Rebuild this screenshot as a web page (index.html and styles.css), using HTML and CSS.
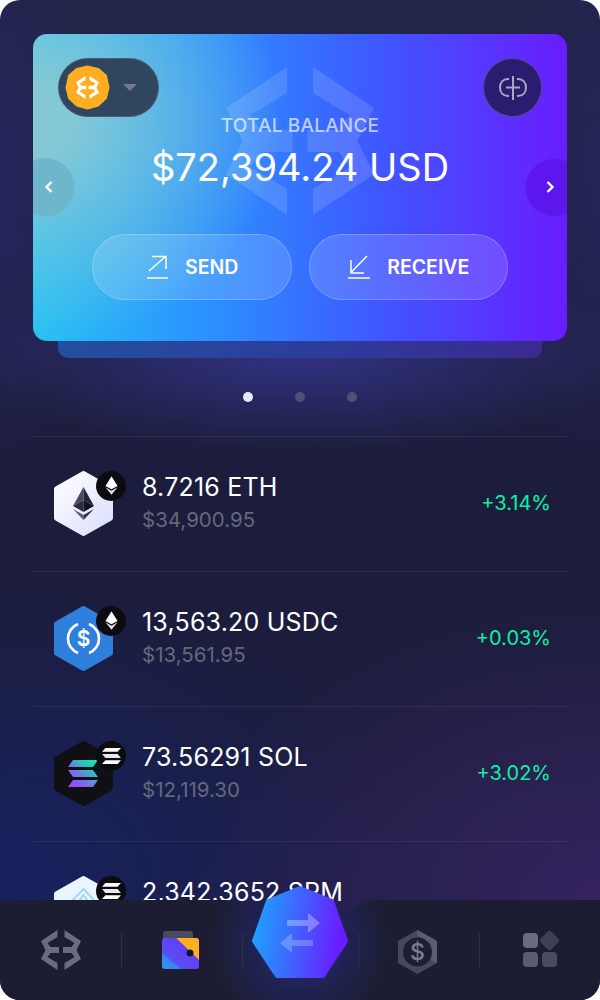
FILE: index.html
```html
<!DOCTYPE html>
<html lang="en">
<head>
  <meta charset="UTF-8" />
  <meta name="viewport" content="width=device-width, initial-scale=1.0"/>
  <title>Wallet</title>
  <link rel="stylesheet" href="styles.css">
</head>
<body>
  <svg class="defs" width="0" height="0" aria-hidden="true">
    <defs>
      <linearGradient id="ethHex" x1="0" y1="0" x2="1" y2="1">
        <stop offset="0" stop-color="#ffffff"/>
        <stop offset="1" stop-color="#d9defc"/>
      </linearGradient>
      <linearGradient id="solBars" gradientUnits="userSpaceOnUse" x1="44" y1="19" x2="20" y2="46">
        <stop offset="0" stop-color="#0ff5a0"/>
        <stop offset="0.35" stop-color="#2fc0c0"/>
        <stop offset="0.6" stop-color="#6a80e0"/>
        <stop offset="1" stop-color="#9945ff"/>
      </linearGradient>
      <linearGradient id="swapFill" x1="0" y1="0" x2="1" y2="0.15">
        <stop offset="0" stop-color="#1ca8ff"/>
        <stop offset="0.45" stop-color="#3a6dff"/>
        <stop offset="1" stop-color="#6a1cff"/>
      </linearGradient>
      <linearGradient id="walletFill" x1="0" y1="1" x2="1" y2="0">
        <stop offset="0" stop-color="#2e9bf0"/>
        <stop offset="0.5" stop-color="#4a62f5"/>
        <stop offset="1" stop-color="#6a35f5"/>
      </linearGradient>
      <radialGradient id="navGlow" gradientUnits="userSpaceOnUse" cx="300" cy="42" r="90">
        <stop offset="0" stop-color="#2a3088"/>
        <stop offset="0.55" stop-color="#1f2250"/>
        <stop offset="1" stop-color="#1c1d33"/>
      </radialGradient>
      <symbol id="mark" viewBox="0 0 40 40">
        <path d="M16.5 0 L0 11 L4.5 20 L0 29 L16.5 40 L16.5 33 L6.5 27 L9.5 23 L18 23 L18 17 L9.5 17 L6.5 13 L16.5 7Z"/>
        <path d="M23.5 0 L40 11 L35.5 20 L40 29 L23.5 40 L23.5 33 L33.5 27 L30.5 23 L22 23 L22 17 L30.5 17 L33.5 13 L23.5 7Z"/>
      </symbol>
      <symbol id="hex" viewBox="0 0 59 65">
        <path d="M29.5 3 L56 18 L56 47 L29.5 62 L3 47 L3 18Z" stroke-width="6" stroke-linejoin="round"/>
      </symbol>
      <symbol id="ethSmall" viewBox="0 0 14 20">
        <path d="M7 0 L13.5 10.5 L7 14 L0.5 10.5Z" fill="#ffffff"/>
        <path d="M0.5 12 L7 15.6 L13.5 12 L7 20Z" fill="#dfe0e8"/>
      </symbol>
      <symbol id="solSmall" viewBox="0 0 20 17">
        <path d="M3.5 0 H20 L16.5 4 H0Z" fill="#ffffff"/>
        <path d="M0 6.5 H16.5 L20 10.5 H3.5Z" fill="#e8e8f0"/>
        <path d="M3.5 13 H20 L16.5 17 H0Z" fill="#ffffff"/>
      </symbol>
    </defs>
  </svg>

  <div class="phone">
    <section class="card-wrap">
      <div class="card">
        <svg class="watermark" aria-hidden="true"><use href="#mark"/></svg>
        <button class="side-btn prev" aria-label="Previous">
          <svg width="10" height="14" viewBox="0 0 10 14"><path d="M7.5 2 L2.5 7 L7.5 12" fill="none" stroke="#fff" stroke-width="2.4"/></svg>
        </button>
        <button class="side-btn next" aria-label="Next">
          <svg width="10" height="14" viewBox="0 0 10 14"><path d="M2.5 2 L7.5 7 L2.5 12" fill="none" stroke="#fff" stroke-width="2.4"/></svg>
        </button>

        <div class="card-top">
          <div class="coin-pill">
            <div class="coin">
              <svg class="coin-shape" width="45" height="45" viewBox="0 0 45 45">
                <path d="M22.5 2 L33 4.5 L40.5 11 L43 22.5 L40.5 33 L33 40 L22.5 43 L12 40 L4.5 33 L2 22.5 L4.5 11 L12 4.5Z" fill="#ffae22" stroke="#ffae22" stroke-width="3" stroke-linejoin="round"/>
              </svg>
              <svg class="coin-mark" width="23" height="23"><use href="#mark"/></svg>
            </div>
            <span class="caret"></span>
          </div>
          <button class="link-btn" aria-label="Connect">
            <svg width="30" height="24" viewBox="0 0 30 24" fill="none" stroke="#a9a6c0" stroke-width="2">
              <path d="M15 0 V24"/>
              <path d="M11 3 H10 C5 3 2 6.500 2 11.500 C2 16.500 5 20 10 20 H11"/>
              <path d="M19 3 H20 C25 3 28 6.500 28 11.500 C28 16.500 25 20 20 20 H19"/>
              <path d="M8 11.500 H22"/>
            </svg>
          </button>
        </div>

        <div class="balance-label">TOTAL BALANCE</div>
        <div class="balance">$72,394.24 USD</div>

        <div class="actions">
          <button class="action">
            <svg width="24" height="24" viewBox="0 0 24 24" fill="none" stroke="#fff" stroke-width="1.500">
              <path d="M2 23 H23"/>
              <path d="M4 16 L20.500 1.500"/>
              <path d="M7 1.500 H21 V14"/>
            </svg>
            <span>SEND</span>
          </button>
          <button class="action">
            <svg width="24" height="24" viewBox="0 0 24 24" fill="none" stroke="#fff" stroke-width="1.500">
              <path d="M1 23 H23"/>
              <path d="M20 1 L4 17.500"/>
              <path d="M4 5 V18 H17"/>
            </svg>
            <span>RECEIVE</span>
          </button>
        </div>
      </div>
      <div class="card-back"></div>
    </section>

    <div class="dots">
      <span class="dot active"></span>
      <span class="dot"></span>
      <span class="dot"></span>
    </div>

    <ul class="assets">
      <li class="asset">
        <div class="asset-icon">
          <svg width="59" height="65" viewBox="0 0 59 65">
            <use href="#hex" fill="url(#ethHex)" stroke="url(#ethHex)"/>
            <path d="M29.500 16 L19 35 L29.500 29Z" fill="#4a4a5c"/>
            <path d="M29.500 16 L40 35 L29.500 29Z" fill="#25253a"/>
            <path d="M19 35 L29.500 29 V41Z" fill="#2c2c40"/>
            <path d="M40 35 L29.500 29 V41Z" fill="#14141f"/>
            <path d="M19 38 L29.500 44 V49Z" fill="#5a5a6e"/>
            <path d="M40 38 L29.500 44 V49Z" fill="#33334a"/>
          </svg>
          <span class="badge"><svg width="13" height="19"><use href="#ethSmall"/></svg></span>
        </div>
        <div class="asset-text">
          <div class="asset-amount">8.7216 ETH</div>
          <div class="asset-usd">$34,900.95</div>
        </div>
        <div class="asset-change">+3.14%</div>
      </li>
      <li class="asset">
        <div class="asset-icon">
          <svg width="59" height="65" viewBox="0 0 59 65">
            <use href="#hex" fill="#2f7fdc" stroke="#2f7fdc"/>
            <path d="M24 18 A15.500 15.500 0 0 0 24 47" fill="none" stroke="#fff" stroke-width="2.600"/>
            <path d="M35 18 A15.500 15.500 0 0 1 35 47" fill="none" stroke="#fff" stroke-width="2.600"/>
            <text class="usdc-sign" x="29.500" y="39.500" text-anchor="middle">$</text>
          </svg>
          <span class="badge"><svg width="13" height="19"><use href="#ethSmall"/></svg></span>
        </div>
        <div class="asset-text">
          <div class="asset-amount">13,563.20 USDC</div>
          <div class="asset-usd">$13,561.95</div>
        </div>
        <div class="asset-change">+0.03%</div>
      </li>
      <li class="asset">
        <div class="asset-icon">
          <svg width="59" height="65" viewBox="0 0 59 65">
            <use href="#hex" fill="#0f0f14" stroke="#0f0f14"/>
            <path d="M19 19 H44 L39 26 H14Z M14 29 H39 L44 36 H19Z M19 39 H44 L39 46 H14Z" fill="url(#solBars)"/>
          </svg>
          <span class="badge"><svg width="19" height="16"><use href="#solSmall"/></svg></span>
        </div>
        <div class="asset-text">
          <div class="asset-amount">73.56291 SOL</div>
          <div class="asset-usd">$12,119.30</div>
        </div>
        <div class="asset-change">+3.02%</div>
      </li>
      <li class="asset">
        <div class="asset-icon">
          <svg width="59" height="65" viewBox="0 0 59 65">
            <use href="#hex" fill="#e9f5fc" stroke="#e9f5fc"/>
            <path d="M13 30 L29.500 13 L46 30 M18 34 L29.500 19 L41 34 M23 38 L29.500 25 L36 38" fill="none" stroke="#9ed6f2" stroke-width="1.800"/>
          </svg>
          <span class="badge"><svg width="19" height="16"><use href="#solSmall"/></svg></span>
        </div>
        <div class="asset-text">
          <div class="asset-amount">2,342.3652 SRM</div>
          <div class="asset-usd">$8,204.11</div>
        </div>
        <div class="asset-change">+1.28%</div>
      </li>
    </ul>

    <nav class="nav">
      <svg class="nav-bg" width="600" height="100" viewBox="0 0 600 100" aria-hidden="true">
        <path d="M0 0 H226 C243 0 250 10 258 18 H342 C352 8 362 0 380 0 H600 V100 H0Z" fill="url(#navGlow)"/>
      </svg>
      <a class="nav-item">
        <svg class="mark-muted" width="40" height="40"><use href="#mark"/></svg>
      </a>
      <a class="nav-item">
        <svg class="nav-wallet" width="37" height="38" viewBox="0 0 37 38">
          <path d="M1 10 V3 Q1 0 4 0 H28 Q31 0 31 3 V10Z" fill="#4a4a5e"/>
          <rect x="0" y="7" width="37" height="31" rx="3" fill="url(#walletFill)"/>
          <path d="M14 7 H34 Q37 7 37 10 V29Z" fill="#ffb020"/>
          <path d="M0 22 V10 Q0 7 3 7 H14 L37 29 V35 Q37 38 34 38 H19Z" fill="#6a35f5" opacity="0.65"/>
          <circle cx="28" cy="22" r="3.500" fill="#15152a"/>
        </svg>
      </a>
      <a class="nav-item nav-gap"></a>
      <a class="nav-item">
        <svg class="nav-earn" width="39" height="44" viewBox="0 0 39 44">
          <path d="M19.500 0 L39 11 V33 L19.500 44 L0 33 V11Z" fill="#47485b"/>
          <path d="M19.500 0 L39 11 V33 L33 30 V14 L19.500 6Z" fill="#5c5d70"/>
          <circle cx="19.500" cy="22" r="14.500" fill="#1d1e34"/>
          <text class="nav-dollar" x="19.500" y="30" text-anchor="middle">$</text>
        </svg>
      </a>
      <a class="nav-item">
        <div class="apps">
          <span class="app a1"></span>
          <span class="app a2"></span>
          <span class="app a3"></span>
          <span class="app a4"></span>
        </div>
      </a>
    </nav>

    <button class="swap" aria-label="Swap">
      <svg width="96" height="92" viewBox="0 0 96 92">
        <path d="M48 2 L80 15 L94 55 L71 90 L25 90 L2 55 L16 15Z" fill="url(#swapFill)" stroke="url(#swapFill)" stroke-width="4" stroke-linejoin="round"/>
        <path d="M35 34 H56 V27 L68 37 L56 47 V40 H35Z" fill="#fff" opacity="0.3"/>
        <path d="M61 54 H40 V47 L28 57 L40 67 V60 H61Z" fill="#fff" opacity="0.24"/>
      </svg>
    </button>
  </div>
</body>
</html>
```

FILE: styles.css
```css
* {
  box-sizing: border-box;
}
body {
  margin: 0;
  background-color: #fff;
  font-family: 'Inter', 'Liberation Sans', sans-serif;
  color: #fff;
}
button {
  font-family: inherit;
  color: inherit;
  border: none;
  padding: 0;
  background: none;
}
.defs {
  position: absolute;
}
.phone {
  position: relative;
  width: 600px;
  height: 1000px;
  padding-top: 34px;
  overflow: hidden;
  border-radius: 20px;
  background-color: #1f2040;
  background-image:
    radial-gradient(ellipse 340px 95px at 300px 355px, rgba(62, 62, 175, 0.6), rgba(62, 62, 175, 0) 100%),
    radial-gradient(ellipse 420px 300px at 600px 900px, rgba(70, 40, 120, 0.6), rgba(70, 40, 120, 0) 100%),
    radial-gradient(ellipse 420px 300px at 0 880px, rgba(20, 35, 110, 0.7), rgba(20, 35, 110, 0) 100%),
    radial-gradient(ellipse 90px 260px at 0 200px, rgba(45, 45, 130, 0.4), rgba(45, 45, 130, 0) 100%),
    radial-gradient(ellipse 90px 260px at 600px 200px, rgba(45, 45, 130, 0.3), rgba(45, 45, 130, 0) 100%),
    linear-gradient(#22244a, #1c1d3c 50%);
}

/* balance card */
.card-wrap {
  margin: 0 33px;
}
.card {
  position: relative;
  height: 307px;
  padding: 24px 25px 0;
  overflow: hidden;
  border-radius: 14px;
  background-image:
    radial-gradient(ellipse 250px 225px at 0 85px, #84c8d6 15%, rgba(132, 200, 214, 0) 100%),
    linear-gradient(90deg, #25c3f4 0%, #2d8bff 36%, #3f57ff 65%, #6a1cff 100%);
}
.card-back {
  height: 17px;
  margin: 0 25px;
  border-radius: 0 0 10px 10px;
  background-image: linear-gradient(90deg, #234f9e, #2c3e9c 50%, #3b2a90);
}
.watermark {
  position: absolute;
  left: 193px;
  top: 33px;
  width: 148px;
  height: 148px;
  fill: rgba(255, 255, 255, 0.13);
}
.side-btn {
  position: absolute;
  top: 124px;
  display: flex;
  align-items: center;
  justify-content: center;
  width: 59px;
  height: 59px;
  padding-bottom: 2px;
  border-radius: 50%;
  border: 1px solid rgba(255, 255, 255, 0.06);
}
.side-btn.prev {
  left: -17px;
  padding-left: 7px;
  background-color: #6db6cb;
}
.side-btn.next {
  right: -17px;
  padding-right: 10px;
  background-color: #5c16ee;
}
.card-top {
  position: relative;
  display: flex;
  justify-content: space-between;
}
.coin-pill {
  display: flex;
  align-items: center;
  gap: 13px;
  width: 101px;
  height: 59px;
  padding-left: 6px;
  border-radius: 30px;
  border: 1px solid rgba(255, 255, 255, 0.12);
  background-color: #30465f;
}
.coin {
  position: relative;
  display: flex;
  align-items: center;
  justify-content: center;
  width: 45px;
  height: 45px;
}
.coin-shape {
  position: absolute;
  left: 0;
  top: 0;
}
.coin-mark {
  position: relative;
  fill: #fff;
}
.caret {
  width: 0;
  height: 0;
  border-left: 7px solid transparent;
  border-right: 7px solid transparent;
  border-top: 7px solid #77788f;
}
.link-btn {
  display: flex;
  align-items: center;
  justify-content: center;
  width: 59px;
  height: 59px;
  border-radius: 50%;
  border: 1px solid rgba(255, 255, 255, 0.2);
  background-color: #2b1c70;
}
.balance-label {
  position: relative;
  height: 17px;
  padding-top: 1px;
  line-height: 16px;
  text-align: center;
  font-size: 19px;
  font-weight: 500;
  letter-spacing: 0.2px;
  color: rgba(255, 255, 255, 0.68);
}
.balance {
  position: relative;
  margin-top: 9px;
  height: 48px;
  line-height: 48px;
  text-align: center;
  font-size: 38px;
  font-weight: 400;
}
.actions {
  position: relative;
  display: flex;
  justify-content: center;
  gap: 17px;
  margin-top: 43px;
}
.action {
  display: flex;
  align-items: center;
  justify-content: center;
  gap: 16px;
  width: 199.5px;
  height: 66px;
  border-radius: 33px;
  border: 1px solid rgba(255, 255, 255, 0.22);
  background-color: rgba(255, 255, 255, 0.14);
  font-size: 19.5px;
  font-weight: 600;
}

/* pager */
.dots {
  display: flex;
  justify-content: center;
  gap: 42px;
  margin-top: 34px;
  height: 44px;
}
.dot {
  width: 10px;
  height: 10px;
  border-radius: 50%;
  background-color: #4f5177;
}
.dot.active {
  background-color: #e6e7fb;
}

/* asset list */
.assets {
  list-style: none;
  margin: 0 33px;
  padding: 0;
}
.asset {
  display: flex;
  align-items: center;
  height: 135px;
  padding: 0 16px 0 21px;
  border-top: 1px solid rgba(255, 255, 255, 0.07);
}
.asset-icon {
  position: relative;
  width: 88px;
  height: 65px;
  margin-top: -2px;
  flex: none;
}
.asset-icon > svg {
  display: block;
}
.badge {
  position: absolute;
  left: 42px;
  top: 0;
  display: flex;
  align-items: center;
  justify-content: center;
  width: 30px;
  height: 30px;
  border-radius: 50%;
  background-color: #0c0c10;
}
.usdc-sign {
  font-size: 21px;
  font-weight: 600;
  fill: #fff;
}
.asset-text {
  flex: 1;
  display: flex;
  flex-direction: column;
  gap: 5px;
  margin-top: -4px;
}
.asset-amount {
  font-size: 25px;
  letter-spacing: 0.2px;
  line-height: 30px;
}
.asset-usd {
  font-size: 20.5px;
  line-height: 26px;
  color: #65677c;
}
.asset-change {
  margin-top: -2px;
  font-size: 20px;
  color: #0ff0a4;
}

/* bottom nav */
.nav {
  position: absolute;
  left: 0;
  bottom: 0;
  display: grid;
  grid-template-columns: 122px 121px 116px 121px 120px;
  align-items: center;
  width: 600px;
  height: 100px;
}
.nav-bg {
  position: absolute;
  left: 0;
  top: 0;
}
.nav-item {
  position: relative;
  display: flex;
  align-items: center;
  justify-content: center;
  height: 34px;
  border-right: 1px solid #2e3046;
}
.nav-item:last-child {
  border-right: none;
}
.nav-wallet {
  margin-right: 3px;
}
.nav-earn {
  margin-top: 3px;
  margin-right: 3px;
}
.mark-muted {
  fill: #6a6b7e;
}
.nav-dollar {
  font-size: 23px;
  font-weight: 500;
  fill: #7b7c90;
}
.apps {
  display: grid;
  grid-template-columns: 15px 15px;
  gap: 4px;
}
.app {
  width: 15px;
  height: 15px;
  border-radius: 4px;
}
.a1 {
  background-color: #6a6b7e;
}
.a2 {
  background-color: #3f4056;
  border-radius: 2px;
  transform: rotate(45deg);
}
.a3 {
  background-color: #5b5c70;
}
.a4 {
  background-color: #4a4b60;
}
.swap {
  position: absolute;
  left: 252px;
  top: 886px;
  display: block;
  width: 96px;
  height: 92px;
}
.swap svg {
  display: block;
}
```
